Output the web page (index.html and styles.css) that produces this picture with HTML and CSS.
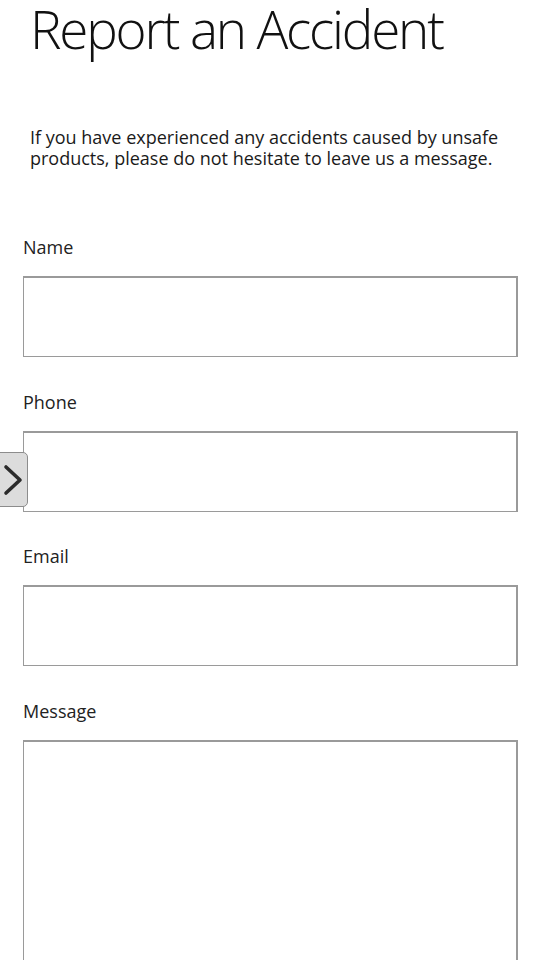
FILE: index.html
```html
<!DOCTYPE html>
<html lang="en">
<head>
    <meta charset="UTF-8">
    <meta name="viewport" content="width=device-width, initial-scale=1.0">
    <title>Report an Accident</title>
    <link rel="stylesheet" href="styles.css">
</head>
<body>
    <div class="page">
        <h1 class="title">Report an Accident</h1>
        <p class="intro">If you have experienced any accidents caused by unsafe products, please do not hesitate to leave us a message.</p>

        <form class="report-form">
            <div class="field">
                <label for="name">Name</label>
                <input type="text" id="name" />
            </div>
            <div class="field">
                <label for="phone">Phone</label>
                <input type="text" id="phone" />
            </div>
            <div class="field">
                <label for="email">Email</label>
                <input type="text" id="email" />
            </div>
            <div class="field">
                <label for="message">Message</label>
                <textarea id="message"></textarea>
            </div>
        </form>
    </div>

    <!-- side drawer toggle -->
    <button class="side-toggle" aria-label="Open menu">
        <svg width="20" height="32" viewBox="0 0 20 32">
            <path d="M3 3 L17 16 L3 29" fill="none" stroke="#2b2b2b" stroke-width="3.6" stroke-linecap="round" stroke-linejoin="round"/>
        </svg>
    </button>
</body>
</html>
```

FILE: styles.css
```css
*{
    margin: 0;
    padding: 0;
    box-sizing: border-box;
    font-family: "Open Sans", sans-serif;
}
body{
    background-color: #ffffff;
    color: #1a1a1a;
}
.page{
    width: 540px;
    padding-bottom: 40px;
}
.title{
    font-weight: 300;
    font-size: 53px;
    letter-spacing: -2.2px;
    line-height: 56px;
    padding: 1px 0 0 30px;
    color: #111111;
    white-space: nowrap;
}
.intro{
    font-size: 18px;
    line-height: 21px;
    padding: 0 30px;
    margin-top: 70px;
    color: #1a1a1a;
}
.report-form{
    margin-top: 66px;
    padding: 0 22px 0 23px;
    display: flex;
    flex-direction: column;
    gap: 32.6px;
}
.field{
    display: flex;
    flex-direction: column;
}
.field label{
    font-size: 18px;
    line-height: 24px;
    margin-bottom: 17px;
    color: #222222;
}
.field input,
.field textarea{
    width: 100%;
    height: 81px;
    border: 1px solid #9a9a9a;
    border-top-width: 2px;
    border-right-width: 2px;
    background-color: #ffffff;
    font-size: 18px;
    resize: none;
    outline: none;
}
.field textarea{
    height: 260px;
}
.side-toggle{
    position: fixed;
    left: -6px;
    top: 452px;
    width: 34px;
    height: 55px;
    background-color: #dcdcdc;
    border: 1px solid #8c8c8c;
    border-radius: 5px;
    display: flex;
    align-items: center;
    justify-content: flex-end;
    padding-right: 4px;
    cursor: pointer;
}
```
